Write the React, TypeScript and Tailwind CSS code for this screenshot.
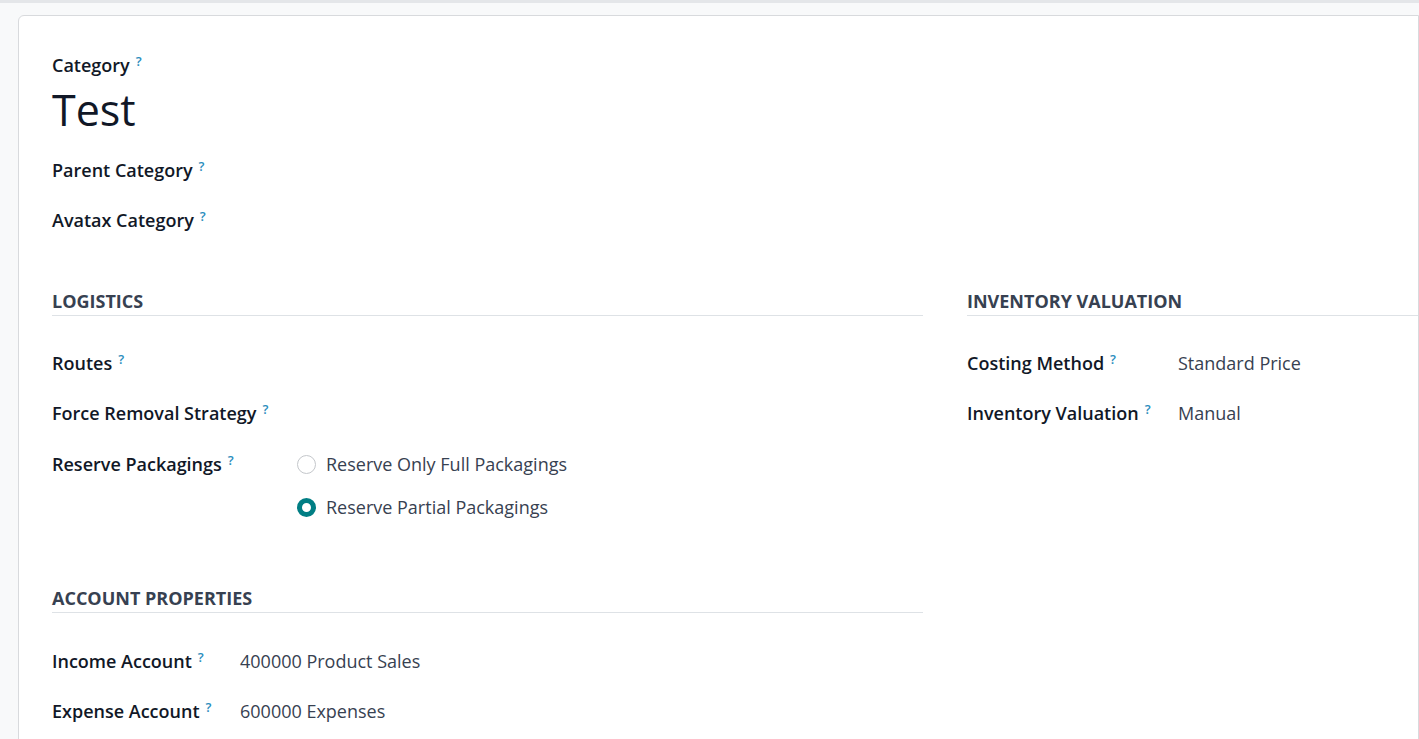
function Help() {
  return <sup className="ml-[6px] text-[13px] font-semibold text-[#2b8dbd] relative -top-[6px]">?</sup>
}

function Field({ label, value, labelW }: { label: string; value?: string; labelW: string }) {
  return (
    <div className="flex py-[13px] leading-[24px]">
      <div className={`${labelW} shrink-0 font-semibold text-[#111827]`}>
        {label}
        <Help />
      </div>
      {value && <div className="text-[#374151]">{value}</div>}
    </div>
  )
}

function Section({ title }: { title: string }) {
  return (
    <div className="border-b border-[#dee2e6] pb-[2px] leading-[24px] font-bold uppercase text-[#374151]">
      {title}
    </div>
  )
}

function Radio({ checked, label }: { checked?: boolean; label: string }) {
  return (
    <div className="flex items-center gap-[10px] leading-[24px] text-[#374151]">
      <span
        className={
          checked
            ? "w-[19px] h-[19px] rounded-full border-[5px] border-[#017e84] bg-white"
            : "w-[19px] h-[19px] rounded-full border border-[#c4c7cb] bg-white"
        }
      />
      {label}
    </div>
  )
}

export default function App() {
  return (
    <main
      className="min-h-screen bg-[#f8f9fa] border-t-[3px] border-[#e4e6e9] pt-[12px] pl-[18px] text-[18px]"
      style={{ fontFamily: '"Open Sans", "Noto Sans", sans-serif' }}
    >
      <div className="bg-white border border-[#d8dadd] rounded-tl-[6px] min-h-[740px] pl-[33px] pt-[37px]">
        <div className="leading-[24px] font-semibold text-[#111827]">
          Category
          <Help />
        </div>
        <h1 className="mt-[7px] text-[43px] leading-[52px] text-[#111827]">Test</h1>
        <div className="mt-[9px]">
          <Field label="Parent Category" labelW="w-[245px]" />
          <Field label="Avatax Category" labelW="w-[245px]" />
        </div>

        <div className="mt-[44px] grid grid-cols-[871px_1fr] gap-x-[44px]">
          <div>
            <Section title="Logistics" />
            <div className="mt-[22px]">
              <Field label="Routes" labelW="w-[245px]" />
              <Field label="Force Removal Strategy" labelW="w-[245px]" />
              <div className="flex pt-[14px] pb-[13px] leading-[24px]">
                <div className="w-[245px] shrink-0 font-semibold text-[#111827]">
                  Reserve Packagings
                  <Help />
                </div>
                <div className="flex flex-col gap-[19px]">
                  <Radio label="Reserve Only Full Packagings" />
                  <Radio checked label="Reserve Partial Packagings" />
                </div>
              </div>
            </div>

            <div className="mt-[54px]">
              <Section title="Account Properties" />
              <div className="mt-[23px]">
                <Field label="Income Account" value="400000 Product Sales" labelW="w-[188px]" />
                <Field label="Expense Account" value="600000 Expenses" labelW="w-[188px]" />
              </div>
            </div>
          </div>

          <div>
            <Section title="Inventory Valuation" />
            <div className="mt-[22px]">
              <Field label="Costing Method" value="Standard Price" labelW="w-[211px]" />
              <Field label="Inventory Valuation" value="Manual" labelW="w-[211px]" />
            </div>
          </div>
        </div>
      </div>
    </main>
  )
}
